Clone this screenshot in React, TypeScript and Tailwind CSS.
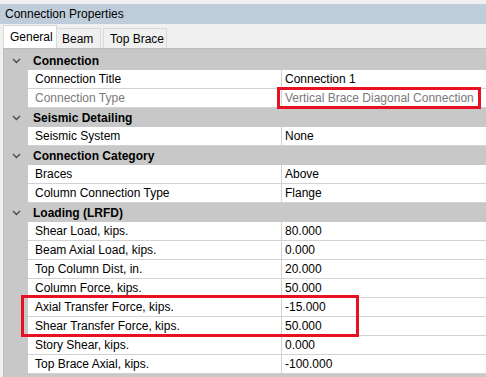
import { FC } from 'react';

type Row = { label: string; value: string; disabled?: boolean };
type Section = { title: string; rows: Row[] };

const sections: Section[] = [
  {
    title: 'Connection',
    rows: [
      { label: 'Connection Title', value: 'Connection 1' },
      { label: 'Connection Type', value: 'Vertical Brace Diagonal Connection', disabled: true },
    ],
  },
  {
    title: 'Seismic Detailing',
    rows: [{ label: 'Seismic System', value: 'None' }],
  },
  {
    title: 'Connection Category',
    rows: [
      { label: 'Braces', value: 'Above' },
      { label: 'Column Connection Type', value: 'Flange' },
    ],
  },
  {
    title: 'Loading (LRFD)',
    rows: [
      { label: 'Shear Load, kips.', value: '80.000' },
      { label: 'Beam Axial Load, kips.', value: '0.000' },
      { label: 'Top Column Dist, in.', value: '20.000' },
      { label: 'Column Force, kips.', value: '50.000' },
      { label: 'Axial Transfer Force, kips.', value: '-15.000' },
      { label: 'Shear Transfer Force, kips.', value: '50.000' },
      { label: 'Story Shear, kips.', value: '0.000' },
      { label: 'Top Brace Axial, kips.', value: '-100.000' },
    ],
  },
];

const Chevron: FC = () => (
  <svg width="9" height="6" viewBox="0 0 9 6" className="block">
    <polyline points="1,1 4.5,4.5 8,1" fill="none" stroke="#4a4a4a" strokeWidth="1.4" />
  </svg>
);

const SectionHeader: FC<{ title: string; first?: boolean }> = ({ title, first }) => (
  <div className={`flex items-center bg-[#c8c8c8] ${first ? 'h-[21px] pt-[2px]' : 'h-[19px]'}`}>
    <div className="flex w-[24px] justify-center pl-[1px]">
      <Chevron />
    </div>
    <span className="pl-[5px] font-bold text-black">{title}</span>
  </div>
);

const PropRow: FC<{ row: Row }> = ({ row }) => (
  <div className="flex h-[19px]">
    <div className="w-[24px] shrink-0 bg-[#c8c8c8]" />
    <div className="flex flex-1 border-b border-[#d2d2d2] bg-white">
      <div
        className={`w-[254px] shrink-0 border-r border-[#d2d2d2] pl-[7px] leading-[18px] ${
          row.disabled ? 'text-[#7a7a7a]' : 'text-black'
        }`}
      >
        {row.label}
      </div>
      <div className={`whitespace-nowrap pl-[3px] leading-[18px] ${row.disabled ? 'text-[#7a7a7a]' : 'text-black'}`}>
        {row.value}
      </div>
    </div>
  </div>
);

const App: FC = () => {
  return (
    <div className="relative h-[377px] w-[486px] overflow-hidden bg-[#f0f0f0] font-['Liberation_Sans',Arial,sans-serif] text-[12px]">
      <div className="h-[4px] bg-[#f0f0f0]" />
      <div className="flex h-[20px] items-center bg-[#bfcddb] pl-[5px] text-black">Connection Properties</div>

      <div className="flex h-[24px] items-end whitespace-nowrap pl-[3px]">
        <div className="flex h-[23px] w-[54px] items-center border border-b-0 border-[#d9d9d9] bg-white pl-[6px]">
          General
        </div>
        <div className="flex h-[20px] w-[44px] items-center border border-b-0 border-l-0 border-[#d9d9d9] pl-[5px]">
          Beam
        </div>
        <div className="ml-[2px] flex h-[20px] w-[64px] items-center border border-b-0 border-[#d9d9d9] pl-[6px]">
          Top Brace
        </div>
      </div>

      <div className="ml-[3px] border-t border-l border-[#bdbdbd]">
        {sections.map((s, i) => (
          <div key={s.title}>
            <SectionHeader title={s.title} first={i === 0} />
            {s.rows.map((r) => (
              <PropRow key={r.label} row={r} />
            ))}
          </div>
        ))}
        <div className="h-[4px] bg-[#c8c8c8]" />
      </div>

      <div className="absolute left-[277px] top-[87px] h-[22px] w-[204px] border-[3px] border-[#e81123]" />
      <div className="absolute left-[21px] top-[295px] h-[42px] w-[338px] border-[3px] border-[#e81123]" />
    </div>
  );
};

export default App;
